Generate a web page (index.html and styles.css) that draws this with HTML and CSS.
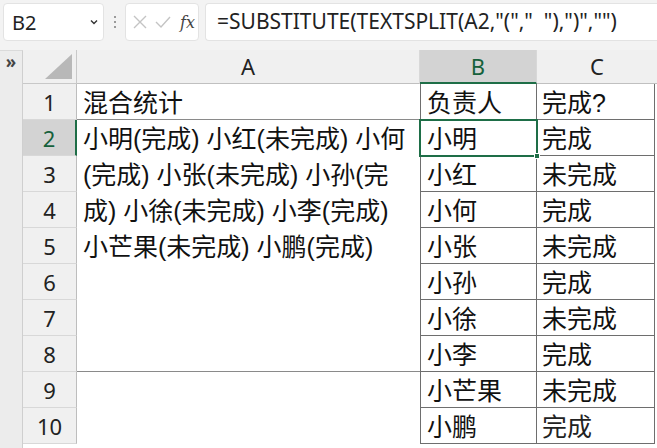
FILE: index.html
```html
<!DOCTYPE html>
<html lang="zh-CN">
<head>
<meta charset="utf-8">
<title>Excel</title>
<link rel="stylesheet" href="styles.css">
</head>
<body>
<div class="toolbar">
  <div class="namebox">
    <span class="ref">B2</span>
    <svg class="chev" width="10" height="8" viewBox="0 0 10 8"><path d="M2 2.5 L5 5.5 L8 2.5" fill="none" stroke="#333" stroke-width="1.4"/></svg>
  </div>
  <div class="dots"><i></i><i></i><i></i></div>
  <div class="fxbox">
    <svg width="16" height="16" viewBox="0 0 16 16"><path d="M2 2 L14 14 M14 2 L2 14" stroke="#c4c4c4" stroke-width="1.4" fill="none"/></svg>
    <svg width="18" height="16" viewBox="0 0 18 16"><path d="M2 8 L7 13 L16 3" stroke="#c4c4c4" stroke-width="1.4" fill="none"/></svg>
    <span class="fx">fx</span>
  </div>
  <div class="formula">=SUBSTITUTE(TEXTSPLIT(A2,"(","&nbsp;&nbsp;"),")","")</div>
</div>
<div class="sheet">
  <div class="strip"><span class="more">»</span></div>
  <div class="grid">
    <div class="corner"><svg width="27" height="25" viewBox="0 0 27 25"><path d="M27 0 L27 25 L0 25 Z" fill="#b8b8b8"/></svg></div>
    <div class="colhead">A</div>
    <div class="colhead sel">B</div>
    <div class="colhead last">C</div>

    <div class="rowhead">1</div>
    <div class="cell a1">混合统计</div>
    <div class="cell tb">负责人</div>
    <div class="cell tc">完成?</div>

    <div class="rowhead sel">2</div>
    <div class="cell amerge">
      <span>小明(完成) 小红(未完成) 小何</span>
      <span>(完成) 小张(未完成) 小孙(完</span>
      <span>成) 小徐(未完成) 小李(完成)</span>
      <span>小芒果(未完成) 小鹏(完成)</span>
    </div>
    <div class="cell tb active">小明<i class="handle"></i></div>
    <div class="cell tc">完成</div>

    <div class="rowhead">3</div>
    <div class="cell tb">小红</div>
    <div class="cell tc">未完成</div>

    <div class="rowhead">4</div>
    <div class="cell tb">小何</div>
    <div class="cell tc">完成</div>

    <div class="rowhead">5</div>
    <div class="cell tb">小张</div>
    <div class="cell tc">未完成</div>

    <div class="rowhead">6</div>
    <div class="cell tb">小孙</div>
    <div class="cell tc">完成</div>

    <div class="rowhead">7</div>
    <div class="cell tb">小徐</div>
    <div class="cell tc">未完成</div>

    <div class="rowhead">8</div>
    <div class="cell tb">小李</div>
    <div class="cell tc">完成</div>

    <div class="rowhead">9</div>
    <div class="cell a"></div>
    <div class="cell tb">小芒果</div>
    <div class="cell tc">未完成</div>

    <div class="rowhead">10</div>
    <div class="cell a"></div>
    <div class="cell tb">小鹏</div>
    <div class="cell tc mark">完成</div>
  </div>
</div>
</body>
</html>
```

FILE: styles.css
```css
* { box-sizing: border-box; }
html, body { margin: 0; padding: 0; }
body {
  width: 657px;
  height: 448px;
  overflow: hidden;
  background: #f3f3f3;
  font-family: "Noto Sans", "Noto Sans CJK SC", sans-serif;
  color: #1a1a1a;
}
.toolbar {
  height: 50px;
  display: flex;
  align-items: flex-start;
  padding: 3px 0 0 3px;
  background: #f3f3f3;
}
.namebox {
  width: 101px;
  height: 38px;
  background: #fff;
  border: 1px solid #e3e3e3;
  border-radius: 4px;
  display: flex;
  align-items: center;
  justify-content: space-between;
  padding: 0 4px 0 8px;
}
.ref { font-size: 20px; color: #222; }
.dots {
  width: 21px;
  height: 38px;
  display: flex;
  flex-direction: column;
  align-items: center;
  justify-content: center;
  gap: 3px;
}
.dots i { display: block; width: 2px; height: 2px; background: #9a9a9a; }
.fxbox {
  width: 74px;
  height: 38px;
  background: #fff;
  border: 1px solid #e3e3e3;
  border-radius: 4px;
  display: flex;
  align-items: center;
  gap: 6px;
  padding-left: 6px;
}
.fx {
  font-family: "DejaVu Serif", "Liberation Serif", serif;
  font-style: italic;
  font-size: 16px;
  color: #444;
  margin-left: 2px;
}
.formula {
  flex: 1;
  margin-left: 6px;
  height: 38px;
  background: #fff;
  border: 1px solid #e3e3e3;
  border-right: none;
  border-radius: 4px 0 0 4px;
  font-family: "Noto Sans", sans-serif;
  font-size: 21px;
  line-height: 35px;
  padding-left: 11px;
  color: #222;
  white-space: nowrap;
}
.sheet {
  display: flex;
  height: 398px;
}
.strip {
  width: 23px;
  background: #ececec;
  border-right: 1px solid #cfcfcf;
  border-top: 1px solid #dadada;
  display: flex;
  justify-content: center;
}
.more { font-size: 17px; font-weight: bold; color: #444; line-height: 20px; margin-top: 1px; }
.grid {
  flex: 1;
  display: grid;
  grid-template-columns: 54px 343px 117px 1fr;
  grid-template-rows: 34px repeat(10, 36px);
  background: #fff;
}
.corner {
  background: #f0f0f0;
  border-right: 1px solid #c8c8c8;
  border-bottom: 1px solid #c8c8c8;
  display: flex;
  align-items: flex-end;
  justify-content: flex-end;
  padding: 0 4px 4px 0;
}
.colhead {
  background: #f0f0f0;
  border-right: 1px solid #d8d8d8;
  border-bottom: 1px solid #c0c0c0;
  font-size: 22px;
  line-height: 33px;
  text-align: center;
  color: #222;
}
.colhead.sel {
  background: #d3d3d3;
  border-bottom: 2px solid #1e6e47;
  color: #16613b;
}
.rowhead {
  background: #f0f0f0;
  border-right: 1px solid #bdbdbd;
  border-bottom: 1px solid #d8d8d8;
  font-size: 22px;
  line-height: 35px;
  padding-top: 1px;
  text-align: center;
  color: #222;
}
.rowhead.sel {
  background: #d3d3d3;
  border-right: 2px solid #1e6e47;
  color: #16613b;
}
.cell {
  font-family: "Liberation Sans", "Noto Sans CJK SC", sans-serif;
  font-size: 25px;
  line-height: 35px;
  padding-top: 2px;
  padding-left: 6px;
  white-space: nowrap;
  overflow: hidden;
  color: #111;
}
.a1 { border-bottom: 1px solid #8a8a8a; }
.amerge {
  grid-row: span 7;
  border-bottom: 1px solid #8a8a8a;
  line-height: 36px;
  padding-top: 1px;
}
.amerge span { display: block; }
.tb {
  border-left: 1px solid #6e6e6e;
  border-right: 1px solid #6e6e6e;
  border-bottom: 1px solid #6e6e6e;
  padding-left: 6px;
  position: relative;
  overflow: visible;
}
.tc {
  border-right: 1px solid #6e6e6e;
  border-bottom: 1px solid #6e6e6e;
  margin-right: 2px;
  padding-left: 5px;
}
.colhead.last { border-right: none; }
.active {
  outline: 2px solid #1e6e47;
  outline-offset: -1px;
  z-index: 2;
}
.handle {
  position: absolute;
  right: -4px;
  bottom: -4px;
  width: 6px;
  height: 6px;
  background: #1e6e47;
  border: 1px solid #fff;
}
.mark { color: #222; }
```
